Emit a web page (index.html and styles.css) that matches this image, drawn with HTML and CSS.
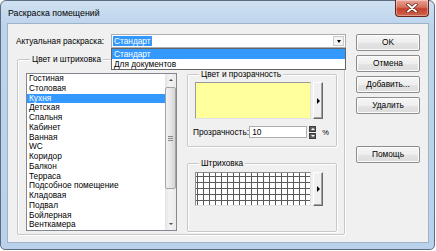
FILE: index.html
```html
<!DOCTYPE html>
<html lang="ru">
<head>
    <meta charset="UTF-8">
    <title>Раскраска помещений</title>
    <link rel="stylesheet" href="styles.css">
</head>
<body>
    <div class="window">
        <!-- Заголовок окна -->
        <div class="titlebar">
            <span class="title">Раскраска помещений</span>
            <div class="close-btn">
                <svg width="12" height="10" viewBox="0 0 12 10">
                    <path d="M2 1.5 L10 8.5 M10 1.5 L2 8.5" stroke="#5a1d15" stroke-width="3.4" stroke-linecap="round"/>
                    <path d="M2 1.5 L10 8.5 M10 1.5 L2 8.5" stroke="#fff" stroke-width="2" stroke-linecap="round"/>
                </svg>
            </div>
        </div>

        <div class="client">
            <div class="main">
                <!-- Актуальная раскраска -->
                <div class="combo-row">
                    <span class="combo-label">Актуальная раскраска:</span>
                    <div class="combo">
                        <span class="combo-value">Стандарт</span>
                        <span class="combo-arrow"><i class="tri-down"></i></span>
                        <ul class="dropdown">
                            <li class="selected">Стандарт</li>
                            <li>Для документов</li>
                        </ul>
                    </div>
                </div>

                <!-- Цвет и штриховка -->
                <div class="group group-main">
                    <div class="group-title">Цвет и штриховка</div>
                    <div class="group-body">
                        <div class="list">
                            <ul class="list-items">
                                <li>Гостиная</li>
                                <li>Столовая</li>
                                <li class="selected">Кухня</li>
                                <li>Детская</li>
                                <li>Спальня</li>
                                <li>Кабинет</li>
                                <li>Ванная</li>
                                <li>WC</li>
                                <li>Коридор</li>
                                <li>Балкон</li>
                                <li>Терраса</li>
                                <li>Подсобное помещение</li>
                                <li>Кладовая</li>
                                <li>Подвал</li>
                                <li>Бойлерная</li>
                                <li>Венткамера</li>
                            </ul>
                            <div class="scrollbar">
                                <div class="sb-arrow"><i class="sb-up"></i></div>
                                <div class="sb-thumb"><i class="grip"></i></div>
                                <div class="sb-track"></div>
                                <div class="sb-arrow"><i class="sb-down"></i></div>
                            </div>
                        </div>

                        <div class="side">
                            <div class="group group-color">
                                <div class="group-title">Цвет и прозрачность</div>
                                <div class="pick-row">
                                    <div class="swatch"></div>
                                    <div class="arrow-btn"><i class="tri-right"></i></div>
                                </div>
                                <div class="opacity-row">
                                    <span class="opacity-label">Прозрачность:</span>
                                    <div class="num-input">10</div>
                                    <div class="spinner">
                                        <div class="spin-half"><i class="spin-up"></i></div>
                                        <div class="spin-half"><i class="spin-down"></i></div>
                                    </div>
                                    <span class="percent">%</span>
                                </div>
                            </div>

                            <div class="group group-hatch">
                                <div class="group-title">Штриховка</div>
                                <div class="pick-row">
                                    <div class="hatch"></div>
                                    <div class="arrow-btn hatch-btn"><i class="tri-right"></i></div>
                                </div>
                            </div>
                        </div>
                    </div>
                </div>
            </div>

            <!-- Кнопки -->
            <div class="buttons">
                <div class="btn">OK</div>
                <div class="btn">Отмена</div>
                <div class="btn">Добавить...</div>
                <div class="btn">Удалить</div>
                <div class="btn btn-help">Помощь</div>
            </div>
        </div>
    </div>
</body>
</html>
```

FILE: styles.css
```css
/* Общие стили */
* {
    box-sizing: border-box;
}
body {
    margin: 0;
    background: #fff;
    font-family: "Liberation Sans", Arial, sans-serif;
    font-size: 8.3px;
    color: #000;
}
ul {
    list-style: none;
    margin: 0;
    padding: 0;
}

/* Рамка окна */
.window {
    width: 435px;
    height: 250px;
    border: 1px solid #5d6d80;
    border-radius: 6px 6px 5px 5px;
    background: linear-gradient(#cfe0f2, #bdd4ec 24px, #b9d1ea);
    padding: 0 5px 6px 6px;
    display: flex;
    flex-direction: column;
}
.titlebar {
    height: 22px;
    display: flex;
    align-items: flex-start;
}
.title {
    margin: 7px 0 0 1px;
    font-size: 8.8px;
    line-height: 11px;
}
.close-btn {
    margin: -1px 0 0 auto;
    width: 34px;
    height: 17px;
    border: 1px solid #6b231a;
    border-top: none;
    border-radius: 0 0 4px 4px;
    background: linear-gradient(#eaa497, #d4705c 45%, #c4412e 55%, #d0644c);
    box-shadow: inset 0 0 0 1px rgba(255, 255, 255, 0.35);
    display: flex;
    align-items: center;
    justify-content: center;
}

/* Клиентская область */
.client {
    height: 220px;
    background: #f0f0f0;
    border: 1px solid #9fb3c8;
    padding: 10px 0 0 8px;
    display: flex;
    gap: 10px;
}
.main {
    width: 330px;
}

/* Комбобокс */
.combo-row {
    display: flex;
    align-items: center;
    height: 14px;
}
.combo-label {
    width: 95px;
    white-space: nowrap;
}
.combo {
    position: relative;
    width: 235px;
    height: 14px;
    border: 1px solid #abadb3;
    background: #fff;
    display: flex;
    align-items: center;
    padding-left: 1px;
}
.combo-value {
    background: #3399ff;
    color: #fff;
    padding: 0 1px;
    line-height: 10px;
}
.combo-arrow {
    margin: 0 1px 0 auto;
    width: 11px;
    height: 10px;
    border: 1px solid #c9c9c9;
    background: #f4f4f4;
    display: flex;
    align-items: center;
    justify-content: center;
}
.tri-down {
    border-top: 3px solid #000;
    border-left: 2.5px solid transparent;
    border-right: 2.5px solid transparent;
}
.dropdown {
    position: absolute;
    top: 13px;
    left: -1px;
    width: 235px;
    background: #fff;
    border: 1px solid #646464;
    z-index: 2;
}
.dropdown li {
    height: 10px;
    line-height: 10px;
    padding-left: 2px;
}
.selected {
    background: #3399ff;
    color: #fff;
}

/* Группы */
.group {
    border: 1px solid #c8c8c8;
    border-radius: 2px;
    box-shadow: inset 1px 1px #fff, 1px 1px #fff;
}
.group-title {
    margin: -7px 0 0 4px;
    padding: 0 2px;
    width: max-content;
    background: #f0f0f0;
    line-height: 12px;
}
.group-main {
    margin: 11px 0 0 1px;
    width: 328px;
    height: 176px;
    padding: 0 7px 0 8px;
}
.group-body {
    display: flex;
    gap: 10px;
    margin-top: 8px;
}

/* Список помещений */
.list {
    width: 151px;
    height: 158px;
    border: 1px solid #828790;
    background: #fff;
    display: flex;
}
.list-items {
    flex: 1;
    overflow: hidden;
}
.list-items li {
    height: 9.75px;
    line-height: 9.75px;
    padding-left: 2px;
    white-space: nowrap;
}
.scrollbar {
    width: 11px;
    display: flex;
    flex-direction: column;
    background: linear-gradient(90deg, #e3e3e3, #f3f3f3 40%, #eaeaea);
}
.sb-arrow {
    height: 12px;
    display: flex;
    align-items: center;
    justify-content: center;
}
.sb-up {
    border-bottom: 2px solid #4d4d4d;
    border-left: 2.5px solid transparent;
    border-right: 2.5px solid transparent;
}
.sb-down {
    border-top: 2px solid #4d4d4d;
    border-left: 2.5px solid transparent;
    border-right: 2.5px solid transparent;
}
.sb-thumb {
    height: 102px;
    margin: 1px 0 0;
    border: 1px solid #a3a3a3;
    border-radius: 2px;
    background: linear-gradient(90deg, #f2f2f2, #e6e6e6 50%, #d4d4d4);
    display: flex;
    align-items: center;
    justify-content: center;
}
.grip {
    width: 5px;
    height: 5px;
    background: repeating-linear-gradient(#8a8a8a 0 1px, transparent 1px 2px);
}
.sb-track {
    flex: 1;
}

/* Правая колонка */
.side {
    width: 150px;
    margin-top: 1px;
    display: flex;
    flex-direction: column;
    gap: 16px;
}
.group-color {
    height: 73px;
    padding: 0 7px;
}
.group-hatch {
    height: 69px;
    padding: 0 7px;
}
.pick-row {
    display: flex;
    gap: 2px;
    margin-top: 2px;
}
.swatch {
    width: 116px;
    height: 37px;
    background: #ffff9c;
    border: 1px solid;
    border-color: #9a9a9a #e2e2e2 #e2e2e2 #9a9a9a;
}
.arrow-btn {
    width: 10px;
    height: 37px;
    background: #f0f0f0;
    border: 1px solid;
    border-color: #fff #6a6a6a #6a6a6a #fff;
    box-shadow: inset -1px -1px #a0a0a0;
    display: flex;
    align-items: center;
    justify-content: center;
}
.tri-right {
    border-left: 3px solid #000;
    border-top: 3px solid transparent;
    border-bottom: 3px solid transparent;
}
.opacity-row {
    display: flex;
    align-items: center;
    height: 12px;
    margin-top: 7px;
}
.opacity-label {
    width: 57px;
    margin-left: -2px;
    white-space: nowrap;
}
.num-input {
    width: 59px;
    height: 12px;
    border: 1px solid #abadb3;
    background: #fff;
    padding-left: 2px;
    line-height: 10px;
}
.spinner {
    margin-left: 2px;
    width: 7px;
    height: 13px;
    display: flex;
    flex-direction: column;
    gap: 1px;
}
.spin-half {
    flex: 1;
    background: #5f5f5f;
    border: 1px solid #3c3c3c;
    display: flex;
    align-items: center;
    justify-content: center;
}
.spin-up {
    border-bottom: 2px solid #fff;
    border-left: 2px solid transparent;
    border-right: 2px solid transparent;
}
.spin-down {
    border-top: 2px solid #fff;
    border-left: 2px solid transparent;
    border-right: 2px solid transparent;
}
.percent {
    margin-left: 6px;
    font-size: 7.5px;
}

/* Штриховка */
.group-hatch .pick-row {
    margin-top: 3px;
}
.hatch {
    width: 116px;
    height: 34px;
    border: 1px solid;
    border-color: #8a8a8a #e2e2e2 #e2e2e2 #8a8a8a;
    background-color: #fff;
    background-image:
        linear-gradient(#5a5a5a 1px, transparent 1px),
        linear-gradient(90deg, #5a5a5a 1px, transparent 1px);
    background-size: 6px 6px;
    background-position: 1px 3px;
}
.hatch-btn {
    height: 34px;
}

/* Кнопки */
.buttons {
    width: 64px;
    display: flex;
    flex-direction: column;
    gap: 4px;
}
.btn {
    height: 17px;
    border: 1px solid #8c8c8c;
    border-radius: 2px;
    background: linear-gradient(#f6f6f6, #eeeeee 50%, #e4e4e4 51%, #dcdcdc);
    box-shadow: inset 0 0 0 1px #fcfcfc;
    line-height: 15px;
    text-align: center;
}
.btn-help {
    margin-top: 28px;
}
```
